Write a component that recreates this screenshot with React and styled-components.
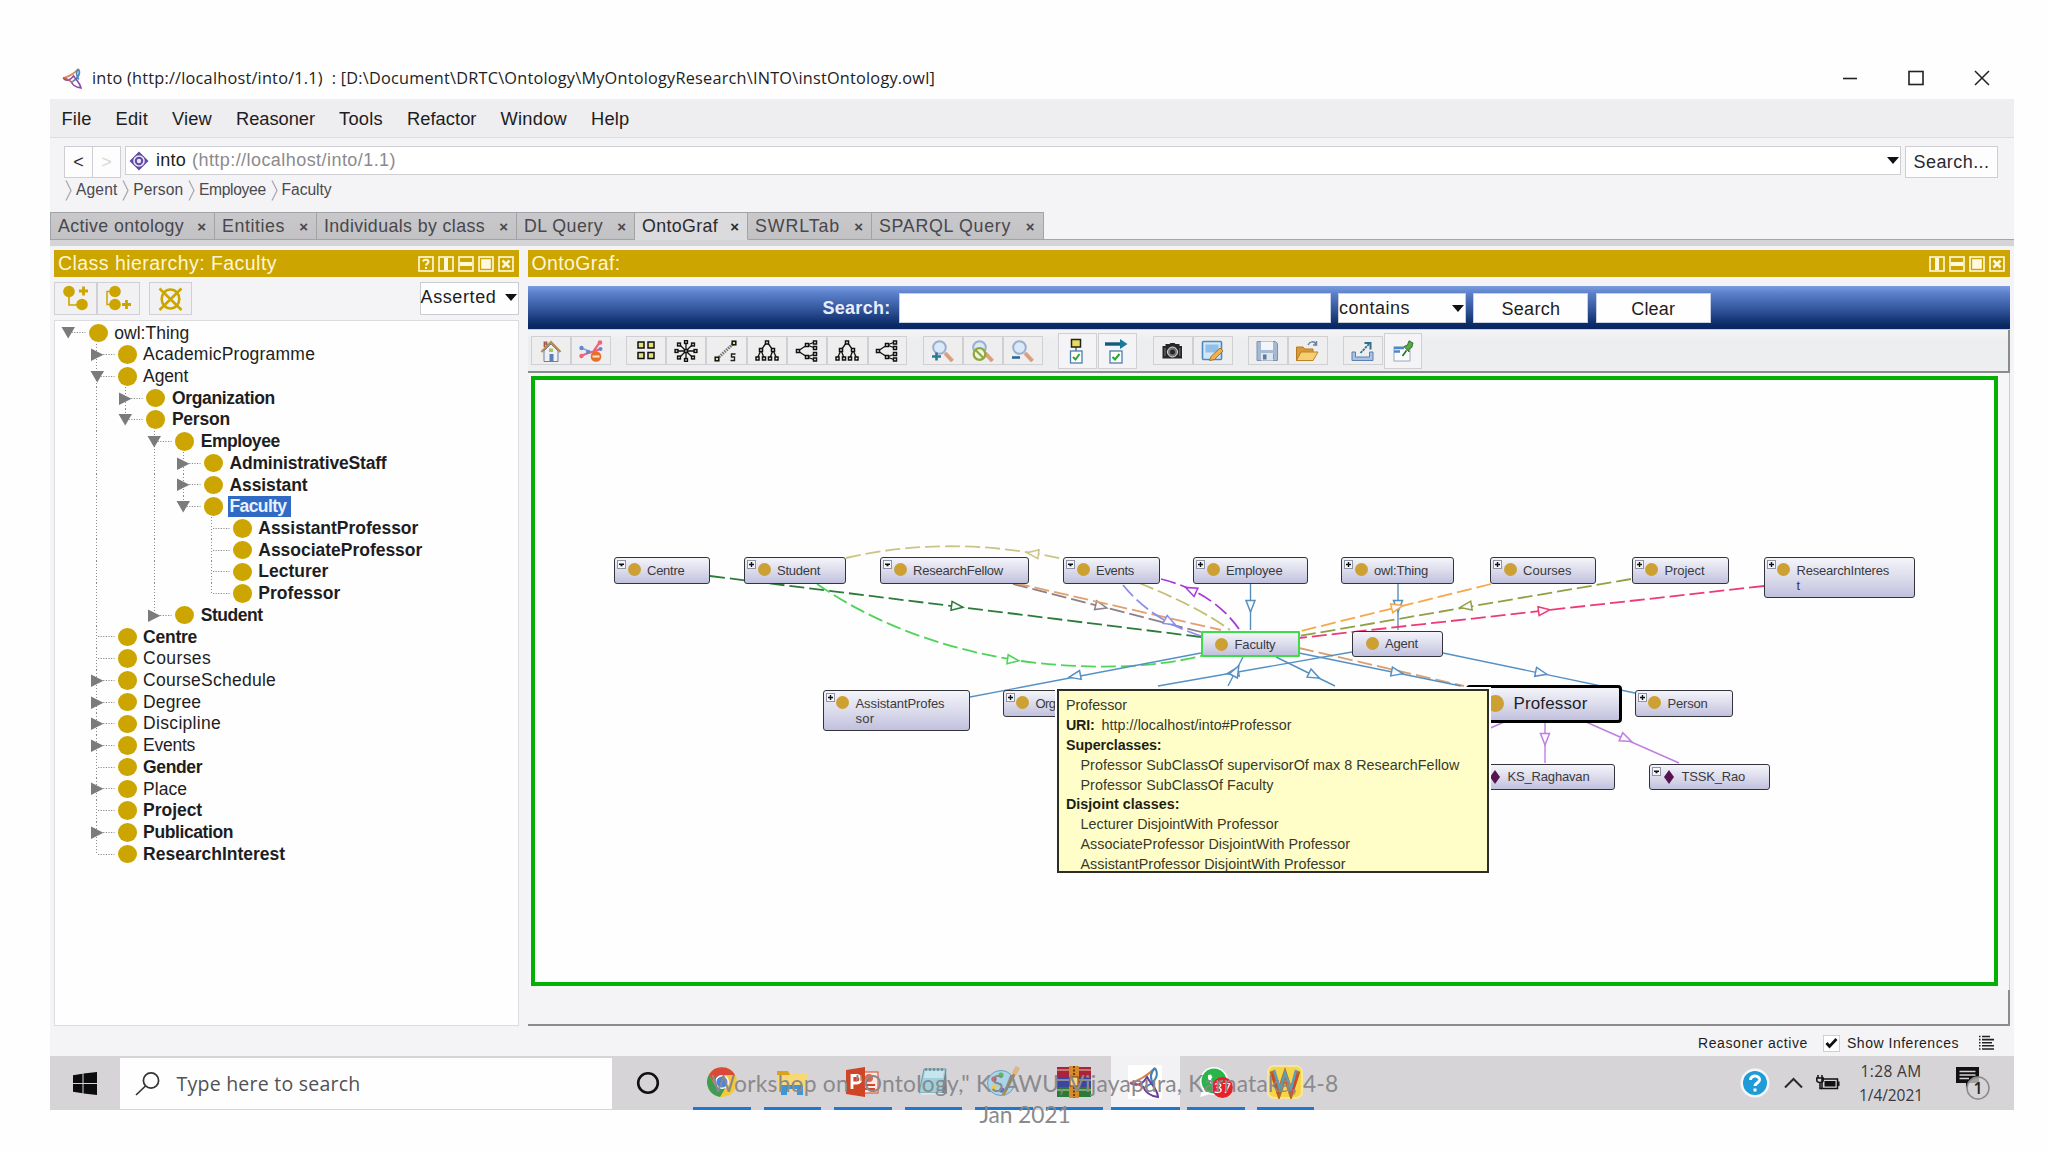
import { useLayoutEffect, useRef } from "react";
import styled, { createGlobalStyle, css } from "styled-components";

const GOLD = "#cca500";
const ARIAL = `"Liberation Sans", Arial, sans-serif`;
const SEGOE = `"Open Sans", "Noto Sans", sans-serif`;

const GlobalStyle = createGlobalStyle`
    * { box-sizing: border-box; }
    body {
        margin: 0;
        background: #fefefe;
        font-family: ${ARIAL};
        color: #1d1d22;
        overflow: hidden;
    }
    svg { display: block; flex: none; }
`

const Label = styled.span`
    display: inline-block;
    white-space: pre;
    flex: none;
`

// spreads the letters so that the label takes exactly the given width
const Fit = ({ w, children }) => {
    const ref = useRef(null);
    useLayoutEffect(() => {
        const el = ref.current;
        el.style.letterSpacing = "0px";
        const natural = el.getBoundingClientRect().width;
        el.style.letterSpacing = `${(w - natural) / children.length}px`;
    }, [w, children]);
    return <Label ref={ref}>{children}</Label>;
}

const Page = styled.div`
    position: relative;
    width: 2048px;
    height: 1152px;
    padding: 57px 34px 0 50px;
    overflow: hidden;
`

const Window = styled.div`
    width: 1964px;
    background: #f4f3f6;
`

/* ---------- title bar and menu ---------- */

const TitleBar = styled.div`
    height: 42px;
    padding: 0 24px 0 12px;
    display: flex;
    align-items: center;
    background: #fefefe;
    font-family: ${SEGOE};
    font-size: 16.3px;
`

const TitleText = styled.div`
    margin-left: 9px;
    flex: 1;
`

const WindowButtons = styled.div`
    display: flex;
    gap: 50px;
`

const MenuBar = styled.div`
    height: 39px;
    padding: 1px 11px 0 11.5px;
    display: flex;
    align-items: center;
    gap: 24px;
    background: #eeedef;
    border-bottom: 1px solid #dddcdf;
    font-size: 18.3px;
`

const AddressRow = styled.div`
    height: 39px;
    padding: 8px 16px 0 14px;
    display: flex;
    align-items: flex-start;
`

const NavButton = styled.button`
    width: ${({ $w }) => $w || 29}px;
    height: 32px;
    padding: 1px 0 0;
    margin-right: ${({ $gap }) => $gap || 0}px;
    background: #fdfdfe;
    border: 1.5px solid #cfced2;
    color: ${({ $off }) => ($off ? "#d8d7da" : "#2a2a2e")};
    font-family: ${ARIAL};
    font-size: 18px;
    & + & { margin-left: -1px; }
`

const Address = styled.div`
    flex: 1;
    height: 29px;
    margin-right: 4px;
    padding: 0 1px 0 3px;
    display: flex;
    align-items: center;
    background: #fff;
    border: 1.5px solid #cfced2;
    font-size: 18px;
`

const AddressUri = styled.div`
    flex: 1;
    margin-left: 6px;
    color: #8b8a8f;
`

const AddressName = styled.div`
    margin-left: 7px;
`

const Crumbs = styled.div`
    height: 35px;
    padding: 2px 0 0 15px;
    display: flex;
    align-items: flex-start;
    gap: 2.7px;
    font-size: 15.6px;
    line-height: 22px;
    color: #4a494f;
`

const Crumb = styled.div`
    display: flex;
    align-items: center;
    gap: 4px;
    margin-right: 2px;
`

/* ---------- tabs ---------- */

const TabStrip = styled.div`
    display: flex;
    height: 28px;
    background: linear-gradient(#a5a4a8, #a5a4a8) bottom / 100% 1.5px no-repeat;
`

const Tab = styled.div`
    width: ${({ $w }) => $w}px;
    padding: 1px 8px 0 7px;
    display: flex;
    align-items: center;
    justify-content: space-between;
    border: 1.5px solid #a3a2a6;
    border-left-width: ${({ $first }) => ($first ? 1.5 : 0)}px;
    background: linear-gradient(#c9c8cb, #c2c1c4);
    color: #48474c;
    font-size: 17.8px;
    ${({ $active }) => $active && css`
        background: #dbdadd;
        border-bottom-color: #dbdadd;
        color: #2a2a2e;
    `}
`

const TabClose = styled.span`
    font-size: 15px;
    font-weight: 700;
    line-height: 14px;
`

const TabShelf = styled.div`
    height: 6px;
    background: #d4d3d6;
`

/* ---------- panels ---------- */

const Main = styled.div`
    height: 784px;
    padding: 4px 4px 4px;
    display: flex;
    gap: 9px;
`

const LeftPanel = styled.div`
    width: 465px;
    display: flex;
    flex-direction: column;
    gap: 5px;
`

const RightPanel = styled.div`
    flex: 1;
    display: flex;
    flex-direction: column;
`

const PanelHeader = styled.div`
    height: 27px;
    padding: 0 5px 0 4px;
    display: flex;
    align-items: center;
    gap: 4px;
    background: ${GOLD};
    color: #fdf6d6;
    font-size: 19.5px;
`

const PanelTitle = styled.div`
    flex: 1;
`

const PanelTools = styled.div`
    height: 33px;
    flex: none;
    display: flex;
`

const ToolButton = styled.div`
    width: ${({ $w }) => $w || 43}px;
    height: ${({ $h }) => $h || 33}px;
    margin-left: ${({ $gap }) => $gap || 0}px;
    display: flex;
    align-items: center;
    justify-content: center;
    background: ${({ $bg }) => $bg || "#f1f0f2"};
    border: 1.5px solid #d0cfd3;
`

const Combo = styled.div`
    width: ${({ $w }) => $w}px;
    height: ${({ $h }) => $h}px;
    padding: 0 1px 0 ${({ $pl }) => $pl || 0}px;
    display: flex;
    align-items: center;
    justify-content: space-between;
    background: #fefefe;
    border: 1.5px solid #cccbd0;
    font-size: 18px;
    padding-bottom: ${({ $lift }) => $lift || 0}px;
`

const Spacer = styled.div`
    flex: 1;
`

const Tree = styled.div`
    flex: 1;
    padding: 1px 0 0 0;
    background: #fefefe;
    border: 1.5px solid #dcdbdf;
`

const TreeRow = styled.div`
    height: 21.72px;
    margin-left: -1.2px;
    display: flex;
    align-items: center;
    font-size: 17.5px;
    font-weight: ${({ $bold }) => ($bold ? 700 : 400)};
`

const Guide = styled.div`
    width: 28.8px;
    height: 100%;
    background: ${({ $on }) => $on ? "repeating-linear-gradient(#8c8c8c 0 1px, transparent 1px 3px) 13.5px 0 / 1.3px 100% no-repeat" : "none"};
`

const TwistyCell = styled.div`
    width: 35px;
    height: 100%;
    display: flex;
    align-items: center;
    background: repeating-linear-gradient(#8c8c8c 0 1px, transparent 1px 3px) 13.5px 0 / 1.3px ${({ $line }) => $line} no-repeat;
`

const ClassDot = styled.span`
    flex: none;
    width: 19px;
    height: 18.5px;
    border-radius: 50%;
    background: ${GOLD};
`

const TreeLabel = styled.div`
    margin-left: 4.5px;
    padding: 0 4px 0 2px;
    height: 20.7px;
    line-height: 21.5px;
    ${({ $selected }) => $selected && css`
        background: #316ac5;
        color: #e8f0ff;
    `}
`

/* ---------- graph ---------- */

const SearchBar = styled.div`
    height: 44px;
    flex: none;
    margin-top: 9px;
    padding: 7px 299px 0 295px;
    display: flex;
    align-items: flex-start;
    gap: 7.3px;
    background: linear-gradient(#7a9ce0 0%, #5a7fca 18%, #2c4f94 60%, #0a2a66 90%, #08265f 100%);
    border-bottom: 1px solid #c9cede;
    font-size: 18px;
    line-height: 30px;
`

const SearchCaption = styled.div`
    margin-right: 1px;
    color: #e8eefb;
    font-weight: 700;
`

const SearchInput = styled.div`
    width: 432px;
    height: 30px;
    background: #fff;
    border: 1px solid #c5cfe6;
`

const SearchButton = styled.div`
    width: 115px;
    height: 30px;
    text-align: center;
    background: #fefefe;
    border: 1px solid #c5cfe6;
`

const IconBar = styled.div`
    height: 43px;
    flex: none;
    padding: 0 0 0 3px;
    display: flex;
    align-items: center;
    background: linear-gradient(#f4f3f5, #ecedee 30%, #edeef0);
    border-bottom: 2px solid #8b8a8d;
    border-right: 2px solid #8b8a8d;
`

const CanvasFrame = styled.div`
    height: 617px;
    flex: none;
    padding: 3px 11.5px 4px 3px;
    border-right: 1.5px solid #cbcacd;
    background: #f6f6f8;
`

const Canvas = styled.div`
    position: relative;
    height: 610px;
    background: #fefefe;
    border: 4px solid #05b005;
    overflow: hidden;
`

const DetailStrip = styled.div`
    height: 36px;
    border-right: 2px solid #8b8a8d;
    border-bottom: 2px solid #8b8a8d;
`

const NodeBox = styled.div`
    position: absolute;
    left: ${({ $x }) => $x - 534}px;
    top: ${({ $y }) => $y - 380}px;
    width: ${({ $w }) => $w}px;
    height: ${({ $h }) => $h}px;
    display: flex;
    background: linear-gradient(#f4f4fa, #dcdcec 50%, #c2c1de);
    border: 1.8px solid #33333b;
    border-radius: 3px;
    color: #3a3a40;
    font-size: 13px;
    line-height: 15px;
    ${({ $variant }) => $variant === "focus" && css`
        border: 2px solid #3ddc4b;
        border-radius: 1px;
    `}
    ${({ $variant }) => $variant === "hover" && css`
        border: 3px solid #000;
        border-radius: 4px;
        color: #222228;
        font-size: 17px;
        line-height: 20px;
    `}
`

const NodeExpand = styled.div`
    width: 12px;
    padding: 2px 0 0 2px;
    flex: none;
`

const NodeMark = styled.div`
    width: ${({ $big }) => ($big ? 33 : 20)}px;
    padding-left: ${({ $big }) => ($big ? 6 : 0.6)}px;
    padding-top: ${({ $big }) => ($big ? 7.5 : 5)}px;
    flex: none;
`

const NodeText = styled.div`
    padding-top: ${({ $big }) => ($big ? 6 : 4.7)}px;
    display: flex;
    flex-direction: column;
    align-items: flex-start;
`

const Tooltip = styled.div`
    position: absolute;
    left: 522.5px;
    top: 309px;
    width: 432px;
    height: 184px;
    padding: 4px 7px 0;
    background: #fffec8;
    border: 2px solid #2e2e28;
    outline: 2px solid #fefefe;
    color: #38382c;
    font-size: 14.3px;
    overflow: hidden;
`

const TipLine = styled.div`
    height: 19.9px;
    padding-left: ${({ $indent }) => ($indent ? 14.5 : 0)}px;
    display: flex;
    align-items: center;
    gap: 7px;
    white-space: nowrap;
    b { color: #1e1e16; }
`

/* ---------- status bar and taskbar ---------- */

const StatusBar = styled.div`
    height: 26px;
    padding-right: 20px;
    display: flex;
    align-items: center;
    justify-content: flex-end;
    font-size: 14px;
    color: #1d1d22;
`

const CheckBox = styled.div`
    width: 17px;
    height: 17px;
    margin: 0 7px 0 15px;
    display: flex;
    align-items: center;
    justify-content: center;
    background: #fff;
    border: 1px solid #cfcfd3;
`

const Taskbar = styled.div`
    height: 54px;
    display: flex;
    align-items: stretch;
    background: #d6d4d6;
`

const TaskCell = styled.div`
    width: ${({ $w }) => $w}px;
    display: flex;
    align-items: center;
    justify-content: center;
`

const TaskSearch = styled.div`
    width: 492px;
    margin: 2px 0 1px;
    padding-left: 15px;
    display: flex;
    align-items: center;
    gap: 16.5px;
    background: #fefefe;
    color: #515156;
    font-family: ${SEGOE};
    font-size: 19.5px;
`

const TaskApp = styled.div`
    width: ${({ $active }) => ($active ? 69 : 57.5)}px;
    margin-right: ${({ $gap }) => $gap}px;
    display: flex;
    align-items: center;
    justify-content: center;
    background: ${({ $active }) => ($active ? "#f2f1f3" : "none")};
    border-bottom: 3px solid #1e78d0;
`

const Tray = styled.div`
    flex: 1;
    display: flex;
    align-items: center;
    justify-content: flex-end;
    padding-right: 23px;
`

const Clock = styled.div`
    width: 66px;
    margin: 0 31px 0 18px;
    text-align: center;
    font-family: ${SEGOE};
    font-size: 15.5px;
    line-height: 24.5px;
    color: #38383c;
`

const SlideFooter = styled.div`
    position: absolute;
    left: 701px;
    top: 1068px;
    width: 648px;
    text-align: center;
    font-family: Lato, sans-serif;
    font-size: 22.8px;
    line-height: 31px;
    color: #8a898c;
`

/* ---------- icons ---------- */

const ProtegeIcon = ({ size = 20 }) => (
    <svg width={size} height={size} viewBox="0 0 20 20" fill="none" strokeWidth="1.6">
        <path d="M1 9.5C6 8.5 11 5.5 15.5 1" stroke="#d98a5a" />
        <path d="M15.5 1C18 5 16 9 10 13M15.500 1C13 4 14 8 16 11" stroke="#4a8ab8" />
        <path d="M1 9.5C4 13 8 12 11 7.500C13 11 17 14 18 19C14 18.500 10 17 9 13" stroke="#8a4aa8" />
        <path d="M1 9.500C5 9.500 7 12 10 14" stroke="#c0605a" />
    </svg>
)

const OntologyIcon = () => (
    <svg width="20" height="20" viewBox="0 0 20 20">
        <path d="M10 .5 19.5 10 10 19.5 .5 10Z" fill="#5f4aa3" />
        <circle cx="10" cy="10" r="5" fill="none" stroke="#e9e4f6" strokeWidth="1.6" />
        <circle cx="10" cy="10" r="2.2" fill="#e9e4f6" />
    </svg>
)

const Caret = () => (
    <svg width="12" height="7" viewBox="0 0 12 7"><path d="M0 0H12L6 7Z" fill="#111" /></svg>
)

const PanelIcon = ({ kind }) => (
    <svg width="16" height="16" viewBox="0 0 16 16" fill="none" stroke="#fff9dd" strokeWidth="1.6">
        <rect x="1" y="1" width="14" height="14" />
        {kind === "help" && <path d="M5 5.5C5.5 3 10.5 3 10.5 5.8C10.5 7.6 8 7.6 8 9.6M8 11V13" strokeWidth="2" />}
        {kind === "cols" && <path d="M8 2V14" strokeWidth="4" />}
        {kind === "rows" && <path d="M2 8H14" strokeWidth="4" />}
        {kind === "full" && <rect x="4" y="4" width="8" height="8" fill="#fff9dd" />}
        {kind === "close" && <path d="M4.5 4.5 11.5 11.5M11.5 4.5 4.5 11.5" strokeWidth="2.6" />}
    </svg>
)

const TreeToolIcon = ({ kind }) => (
    <svg width="27" height="27" viewBox="0 0 27 27" fill={GOLD} stroke={GOLD}>
        {kind === "child" && <>
            <circle cx="7" cy="6.500" r="5.800" stroke="none" /><circle cx="20" cy="19.500" r="5.800" stroke="none" />
            <path d="M7 8V20H16" fill="none" strokeWidth="1.6" />
            <path d="M17 6H26M21.5 1.500V10.500" strokeWidth="2.8" />
        </>}
        {kind === "sibling" && <>
            <circle cx="10" cy="6.500" r="5.800" stroke="none" /><circle cx="10" cy="19.500" r="5.800" stroke="none" />
            <path d="M7 6.5H2V19.500H7" fill="none" strokeWidth="1.5" />
            <path d="M17 19.5H26M21.5 15V24" strokeWidth="2.8" />
        </>}
        {kind === "delete" && <>
            <ellipse cx="13.5" cy="14" rx="8.800" ry="9.500" fill="none" strokeWidth="2.6" />
            <path d="M2.500 3.500 24.500 25M24.500 3.500 2.500 25" strokeWidth="2.6" />
        </>}
    </svg>
)

const Twisty = ({ state }) => (
    <svg width="34" height="21" viewBox="0 0 34 21">
        <path d="M15 10.500H31.500" stroke="#8c8c8c" strokeWidth="1.2" strokeDasharray="1.200 1.400" />
        {state === "open" && <path d="M7.500 5H21L14.200 16.500Z" fill="#7b7b7b" />}
        {state === "closed" && <path d="M8 4.500V17L20.500 10.700Z" fill="#7b7b7b" />}
    </svg>
)

const Sq = ({ x, y, s = 3.6, fill = "#fff" }) => (
    <rect x={x - s / 2} y={y - s / 2} width={s} height={s} fill={fill} stroke="#111" strokeWidth="1.500" />
)

const GraphIcon = ({ kind }) => {
    const box = { width: 24, height: 22, viewBox: "0 0 24 22", fill: "none" };
    switch (kind) {
        case "home":
            return <svg {...box}>
                <path d="M5 11V21.500H19V11L12 4Z" fill="#eef0f6" stroke="#6d7f9c" />
                <path d="M2.500 12 12 2 21.500 12" stroke="#b58a56" strokeWidth="2.200" />
                <path d="M5.500 1.500V7M7.500 1.500V5" stroke="#a05a48" strokeWidth="1.800" />
                <rect x="10.500" y="14" width="4" height="7.500" fill="#5f7fb8" />
                <rect x="10" y="8.500" width="4" height="3.500" fill="#a8c458" />
            </svg>
        case "remove":
            return <svg {...box}>
                <path d="M2 8 21 15" stroke="#7f9fe4" strokeWidth="1.700" />
                <path d="M2 16 9 13 14 12 21 2M14 12 21 9" stroke="#ee6478" strokeWidth="2.200" />
                <circle cx="2.500" cy="8" r="2.200" fill="#5f86d8" /><circle cx="2.500" cy="16" r="2.200" fill="#ee6478" />
                <circle cx="9" cy="12" r="2" fill="#5f86d8" />
                <circle cx="21" cy="2.500" r="2.300" fill="#ee6478" /><circle cx="21.500" cy="9" r="2" fill="#5f86d8" />
                <circle cx="17" cy="16.500" r="5.300" fill="#e5702c" /><path d="M13.500 16.500H20.500" stroke="#ffe3cc" strokeWidth="2" />
            </svg>
        case "grid":
            return <svg {...box}>
                {[[7, 5], [17, 5], [7, 15.5], [17, 15.5]].map(([x, y]) => <Sq key={x + "-" + y} x={x} y={y} s={6} fill="#e4e07a" />)}
            </svg>
        case "radial":
            return <svg {...box}>
                <path d="M12 2V20M2 11H22M5 4 19 18M19 4 5 18" stroke="#111" strokeWidth="1.300" />
                {[[12, 2], [12, 20], [2.5, 11], [21.5, 11], [5, 4.5], [19, 17.5], [19, 4.5], [5, 17.5], [12, 11]].map(([x, y]) => <Sq key={x + "-" + y} x={x} y={y} s={2.8} />)}
            </svg>
        case "spring":
            return <svg {...box}>
                <path d="M5 17 19 4" stroke="#777" strokeWidth="3" strokeDasharray="1.500 1" />
                <Sq x={3} y={19} fill="#e4e07a" /><Sq x={20} y={3} fill="#e4e07a" />
                <path d="M21.500 14H17.500V17H20.500V20.500H16.500" stroke="#222" strokeWidth="1.400" />
            </svg>
        case "treeV":
            return <svg {...box}>
                <path d="M12 2 6 10 2.500 18M12 2 18 10 21.500 18M6 10 9 18M18 10 15 18" stroke="#111" strokeWidth="1.300" />
                {[[12, 2.5], [6, 10], [18, 10], [2.5, 18.5], [9, 18.5], [15, 18.5], [21.5, 18.5]].map(([x, y]) => <Sq key={x + "-" + y} x={x} y={y} s={3} />)}
            </svg>
        case "treeH":
            return <svg {...box}>
                <path d="M3 11 12 5 20 2M3 11 12 17 20 20M12 5 20 8M12 17 20 14" stroke="#111" strokeWidth="1.300" />
                {[[3, 11], [12, 5], [12, 17], [20, 2.5], [20, 8], [20, 14], [20, 19.5]].map(([x, y]) => <Sq key={x + "-" + y} x={x} y={y} s={3} />)}
            </svg>
        case "zoomIn":
        case "zoomNone":
        case "zoomOut":
            return <svg {...box}>
                <path d="M14 13 21.500 21" stroke="#d9a080" strokeWidth="4" />
                <circle cx="8.500" cy="7.500" r="6.300" fill="#dbe8f6" stroke="#9aaed0" strokeWidth="2" />
                {kind === "zoomIn" && <path d="M1 16.500H10M5.500 12.500V20.500" stroke="#2a7a96" strokeWidth="2.600" />}
                {kind === "zoomOut" && <path d="M1 17.500H9" stroke="#2a6a96" strokeWidth="2.600" />}
                {kind === "zoomNone" && <><circle cx="8.500" cy="14" r="5.800" fill="#eef4e0" stroke="#8da83c" strokeWidth="2.200" /><path d="M4.500 10 12.500 18" stroke="#8da83c" strokeWidth="2.200" /></>}
            </svg>
        case "nodeTypes":
            return <svg width="24" height="26" viewBox="0 0 24 26" fill="none">
                <rect x="6.500" y="1.500" width="9" height="7.500" fill="#e6dc58" stroke="#222" strokeWidth="1.500" />
                <path d="M11 9V13" stroke="#222" />
                <rect x="5.500" y="13" width="11.500" height="12" fill="#fff" stroke="#4a7fb0" strokeWidth="1.300" />
                <path d="M8 19 10.500 21.500 14.500 16" stroke="#2ba52b" strokeWidth="2" />
            </svg>
        case "arcTypes":
            return <svg width="24" height="26" viewBox="0 0 24 26" fill="none">
                <path d="M0 6H17" stroke="#125a7c" strokeWidth="3.400" /><path d="M15 1 22.500 6 15 11Z" fill="#1b7a9c" />
                <rect x="5" y="13" width="12" height="12" fill="#fff" stroke="#4a7fb0" strokeWidth="1.300" />
                <path d="M7.500 19 10 21.500 14.500 16" stroke="#2ba52b" strokeWidth="2" />
            </svg>
        case "camera":
            return <svg {...box}>
                <path d="M1.500 6H4.500V4H8.500L9.500 3H13.500L14.500 4H18.500V6H21V18.500H1.500Z" fill="#26262a" />
                <circle cx="11.500" cy="12" r="5" fill="#777" stroke="#ddd" strokeWidth="1" /><circle cx="11.500" cy="12" r="2.500" fill="#26262a" />
                <path d="M4 8V16M18.800 8V16" stroke="#777" />
            </svg>
        case "editImage":
            return <svg {...box}>
                <rect x="1.500" y="1.500" width="19" height="18" rx="1" fill="#d3e6f7" stroke="#4a8ac4" strokeWidth="1.600" />
                <rect x="4.500" y="4.500" width="13" height="8" fill="#8fc0ea" />
                <path d="M8.500 20.500 10 16.500 19 8 22 11 13.500 19.500Z" fill="#f0b04a" stroke="#a8742a" />
            </svg>
        case "save":
            return <svg {...box}>
                <path d="M1 1.500H19.500L21.500 3.500V20.500H1Z" fill="#a6b9d4" stroke="#7c92b5" />
                <rect x="5" y="1.500" width="12" height="8.500" fill="#f2f5fa" />
                <rect x="5" y="13" width="12" height="7.500" fill="#dfe6ec" /><rect x="7" y="14.500" width="3.500" height="5" fill="#5a7a9a" />
                <path d="M17.500 14V19" stroke="#8aa86a" />
            </svg>
        case "open":
            return <svg {...box}>
                <path d="M.5 20.500V7H7L9 9H17V20.500Z" fill="#d99a35" stroke="#b57a22" />
                <path d="M.5 20.500 5 12H22L17 20.500Z" fill="#f6cf72" stroke="#b98426" />
                <path d="M12 5C14 1 18 1 20 4M20.500 1V5H17" stroke="#6a7fa8" strokeWidth="1.500" />
            </svg>
        case "export":
            return <svg {...box}>
                <path d="M1 12V20.500H22V12H18.500V17H4.500V12Z" fill="#a9c2e0" stroke="#5a80b4" />
                <path d="M9.500 13 18 4" stroke="#2f7090" strokeWidth="1.800" strokeDasharray="2.500 .8" /><path d="M13.500 3H19.500V9.500" stroke="#2f7090" strokeWidth="2" />
            </svg>
        default:
            return <svg {...box}>
                <rect x="3" y="7" width="16" height="14" fill="#fbfcfe" stroke="#9aa8bc" />
                <path d="M3 8H13M3 11.500H9" stroke="#4a88d0" strokeWidth="2.600" />
                <path d="M11.500 16 15.500 10.500" stroke="#2a6a2a" strokeWidth="1.600" />
                <path d="M13 6.500 16.500 5 18 .8 22 3 20.800 7.500 18 9 18 12Z" fill="#58a644" stroke="#2e7a2e" />
            </svg>
    }
}

const AppIcon = ({ name }) => {
    const box = { width: 34, height: 32, viewBox: "0 0 34 32" };
    switch (name) {
        case "chrome":
            return <svg {...box}>
                <circle cx="17" cy="16" r="15" fill="#f6c83a" />
                <path d="M4 8.500A15 15 0 0 0 15 30.900L21 21 10.500 20Z" fill="#3f9c50" />
                <path d="M4 8.500 11 20 17 9H30A15 15 0 0 0 4 8.500Z" fill="#d94a3a" />
                <circle cx="17" cy="16" r="7" fill="#fff" /><circle cx="17" cy="16" r="5.500" fill="#4a86e0" />
            </svg>
        case "explorer":
            return <svg {...box}>
                <path d="M2 5H13L15 8H32V26H2Z" fill="#f8d775" /><path d="M2 5H13L15 9H2Z" fill="#d9a023" />
                <path d="M6 29V19H28V29H22V23H12V29Z" fill="#3f95d8" />
            </svg>
        case "powerpoint":
            return <svg {...box}>
                <rect x="15" y="6" width="17" height="21" fill="#fbe9e4" stroke="#d4472b" />
                <circle cx="23" cy="12" r="4" fill="#e0644a" /><path d="M19 19H29M19 23H29" stroke="#d4472b" strokeWidth="2" />
                <path d="M0 4 19 1V31L0 28Z" fill="#d04526" />
                <path d="M6 23V9.500H11C16 9.500 16 17 11 17H6" fill="none" stroke="#fff" strokeWidth="2.800" />
            </svg>
        case "notepad":
            return <svg {...box}>
                <path d="M8 3H30L26 27H3Z" fill="#9fd0de" stroke="#6f98a8" /><path d="M9 5H28L27 12H8Z" fill="#c5e6ee" />
                <path d="M30 3 31 28 26 27Z" fill="#777f88" /><path d="M3 27 26 27 31 28 7 29Z" fill="#dfe6e8" />
                <path d="M10 2V5M14 2V5M18 2V5M22 2V5M26 2V5" stroke="#666" />
            </svg>
        case "paint":
            return <svg {...box}>
                <ellipse cx="14" cy="17" rx="13.500" ry="12.500" fill="#a9d4ea" stroke="#6b9fc0" />
                <circle cx="7" cy="13" r="2.600" fill="#d9534f" /><circle cx="14" cy="9" r="2.600" fill="#5cb85c" />
                <circle cx="7" cy="21" r="2.600" fill="#f0c84a" /><circle cx="15" cy="24" r="2.600" fill="#4a78c8" />
                <path d="M16 29 29 5" stroke="#b8864a" strokeWidth="3" /><path d="M27 8 31 1" stroke="#d8b890" strokeWidth="5" />
            </svg>
        case "winrar":
            return <svg {...box}>
                <rect x="0" y="1" width="34" height="10" fill="#a8243c" /><rect x="0" y="11" width="34" height="10" fill="#3a46a0" />
                <rect x="0" y="21" width="34" height="10" fill="#2a7a3a" />
                <path d="M0 4H34M0 14H34M0 24H34" stroke="#e2c9a0" strokeWidth="1" />
                <rect x="12" y="0" width="10" height="32" fill="#d88a2a" /><rect x="13" y="11" width="8" height="9" fill="#f5d68a" stroke="#6a4212" />
                <path d="M17 0V10M17 21V32" stroke="#6a4212" strokeWidth="2" strokeDasharray="2 1.500" />
            </svg>
        case "protege":
            return <svg width="34" height="34" viewBox="0 0 34 34" fill="none">
                <rect width="34" height="34" fill="#fff" />
                <path d="M2 18C10 16 19 11 27 3" stroke="#d9814a" strokeWidth="2" />
                <path d="M27 3C32 11 26 18 17 22M27 3C21 9 22 14 26 19" stroke="#3f83b5" strokeWidth="2" />
                <path d="M2 18C9 22 15 19 19 12C22 18 30 24 30 32C22 31 17 27 15 21" stroke="#6a3d9a" strokeWidth="2" />
                <path d="M2 18C8 17 12 20 16 24" stroke="#c0586a" strokeWidth="1.500" />
            </svg>
        case "whatsapp":
            return <svg {...box}>
                <circle cx="15" cy="15" r="14" fill="#fff" /><path d="M1 31 4 22 11 28Z" fill="#fff" />
                <circle cx="15" cy="15" r="12.500" fill="#2ab54a" />
                <path d="M9 9C8 15 14 22 21 21L21.500 18 18 16.500 16 18C14 17 12.500 15 12 13L13.500 11.500 12 8.500Z" fill="#fff" />
                <ellipse cx="23.500" cy="21.500" rx="10.500" ry="10.500" fill="#e8202a" />
                <text x="23.500" y="26.500" textAnchor="middle" fontFamily="Open Sans" fontSize="15" fill="#fff">37</text>
            </svg>
        default:
            return <svg width="36" height="34" viewBox="0 0 36 34" fill="none">
                <rect x="1" y="1" width="34" height="32" rx="6" fill="#f7d548" stroke="#f9e69a" strokeWidth="2" />
                <path d="M5 6 12 28 18 10 24 28 31 6" stroke="#b5682c" strokeWidth="5" />
                <path d="M7 5 13 24 18 8 24 24 29 5" stroke="#5a9fb8" strokeWidth="2.500" />
                <path d="M5 9 11 29M25 28 31 9" stroke="#d8442e" strokeWidth="2" />
            </svg>
    }
}

/* ---------- data ---------- */

const MENUS = [["File", 30], ["Edit", 32.5], ["View", 40], ["Reasoner", 79], ["Tools", 44], ["Refactor", 69.5], ["Window", 66.5], ["Help", 38.5]];

const CRUMBS = [["Agent", 41.5], ["Person", 50], ["Employee", 67], ["Faculty", 50]];

const TABS = [
    ["Active ontology", 126, 165],
    ["Entities", 63, 102],
    ["Individuals by class", 161, 200],
    ["DL Query", 79, 118],
    ["OntoGraf", 76, 113],
    ["SWRLTab", 85, 124],
    ["SPARQL Query", 132, 171.5],
];

// name, label width, level, bold, state, last child, ancestor guides
const TREE = [
    ["owl:Thing", 75, 0, false, "open", true, []],
    ["AcademicProgramme", 172, 1, false, "closed", false, [0]],
    ["Agent", 45, 1, false, "open", false, [0]],
    ["Organization", 103, 2, true, "closed", false, [0, 1]],
    ["Person", 58, 2, true, "open", true, [0, 1]],
    ["Employee", 79, 3, true, "open", false, [0, 1, 0]],
    ["AdministrativeStaff", 157, 4, true, "closed", false, [0, 1, 0, 1]],
    ["Assistant", 78, 4, true, "closed", false, [0, 1, 0, 1]],
    ["Faculty", 57, 4, true, "open", true, [0, 1, 0, 1]],
    ["AssistantProfessor", 160, 5, true, null, false, [0, 1, 0, 1, 0]],
    ["AssociateProfessor", 164, 5, true, null, false, [0, 1, 0, 1, 0]],
    ["Lecturer", 70, 5, true, null, false, [0, 1, 0, 1, 0]],
    ["Professor", 82, 5, true, null, true, [0, 1, 0, 1, 0]],
    ["Student", 62, 3, true, "closed", true, [0, 1, 0]],
    ["Centre", 54, 1, true, null, false, [0]],
    ["Courses", 68, 1, false, null, false, [0]],
    ["CourseSchedule", 133, 1, false, "closed", false, [0]],
    ["Degree", 58, 1, false, "closed", false, [0]],
    ["Discipline", 78, 1, false, "closed", false, [0]],
    ["Events", 52, 1, false, "closed", false, [0]],
    ["Gender", 59, 1, true, null, false, [0]],
    ["Place", 44, 1, false, "closed", false, [0]],
    ["Project", 59, 1, true, null, false, [0]],
    ["Publication", 90, 1, true, "closed", false, [0]],
    ["ResearchInterest", 142, 1, true, null, true, [0]],
];

const TOOLS = [
    ["home", 40], ["remove", 40], ["grid", 40, 15], ["radial", 40], ["spring", 41], ["treeV", 40], ["treeH", 40], ["treeV", 41], ["treeH", 39.5],
    ["zoomIn", 40, 15.5], ["zoomNone", 40], ["zoomOut", 40], ["nodeTypes", 39, 15, true], ["arcTypes", 39, 1, true],
    ["camera", 40, 16], ["editImage", 40], ["save", 40, 15], ["open", 40], ["export", 40, 15], ["pin", 38, 1, true],
];

const NODES = [
    { x: 613.5, y: 557, w: 96, lines: [["Centre", 37.5]], sign: "-" },
    { x: 743.5, y: 557, w: 102, lines: [["Student", 43]] },
    { x: 879.5, y: 557, w: 149, lines: [["ResearchFellow", 90]], sign: "-" },
    { x: 1062.5, y: 557, w: 96.5, lines: [["Events", 38]], sign: "-" },
    { x: 1192.5, y: 557, w: 114.5, lines: [["Employee", 56.5]] },
    { x: 1340.5, y: 557, w: 112.5, lines: [["owl:Thing", 54]] },
    { x: 1489.5, y: 557, w: 105.5, lines: [["Courses", 48.5]] },
    { x: 1631, y: 557, w: 97.5, lines: [["Project", 40]] },
    { x: 1763, y: 557, w: 151.5, h: 41, lines: [["ResearchInteres", 92.5], ["t", 4]] },
    { x: 1200, y: 630.5, w: 99, lines: [["Faculty", 41]], variant: "focus", sign: "none" },
    { x: 1351.5, y: 630.5, w: 91, lines: [["Agent", 33]], sign: "none" },
    { x: 822, y: 690, w: 147, h: 41, lines: [["AssistantProfes", 89], ["sor", 19]] },
    { x: 1002, y: 690, w: 122, lines: [["Org", 20]] },
    { x: 1634, y: 690, w: 98.5, lines: [["Person", 40]] },
    { x: 1465, y: 684.5, w: 156, h: 38, lines: [["Professor", 74]], variant: "hover", sign: "none" },
    { x: 1474, y: 763.5, w: 140, lines: [["KS_Raghavan", 82]], individual: true },
    { x: 1648, y: 763.5, w: 121, lines: [["TSSK_Rao", 63.5]], individual: true, sign: "-" },
];

// path, colour, dashed, arrow x, arrow y, arrow angle
const EDGES = [
    ["M845 558Q950 534 1062 559", "#c9c585", true, 1032, 553.5, 187],
    ["M1138 583Q1196 606 1229 630", "#c3bd70", true],
    ["M709 576 1200 637", "#2c7a3c", true, 956, 606.5, 7],
    ["M816 584C880 628 950 650 1020 661C1090 670 1150 668 1200 656", "#4fd35a", true, 1012, 660, 8],
    ["M1012 584 1200 632", "#8c8088", true, 1100, 606.5, 14],
    ["M1014 583 1220 630", "#e0a070", true],
    ["M1298 648 1463 686", "#dba070", true],
    ["M1122 585Q1150 620 1200 636", "#8c8cf0", true, 1169, 622, 28],
    ["M1160 579Q1212 592 1238 629", "#a838dc", true, 1190, 590, 205],
    ["M1249.5 583V630", "#5590bd", false, 1249.5, 606, 90],
    ["M1397 583V630", "#5590bd", false, 1397, 606, 90],
    ["M1490 584 1298 631.5", "#f5a84a", true, 1396, 607, -14],
    ["M1630 579 1298 636", "#92a045", true, 1465, 606.5, 171],
    ["M1763 586 1298 638", "#ee3a76", true, 1543, 610.5, -7],
    ["M1200 653 969 697", "#5590c4", false, 1074, 676, 169],
    ["M1351 652 1157 686", "#5590c4", false, 1232, 672.5, 170],
    ["M1242 657 1227 686", "#5590c4", false, 1235, 671, 298],
    ["M1275 657 1334 686", "#5590c4", false, 1313, 675.5, 26],
    ["M1298 653 1460 686", "#5590c4", false, 1396, 672.5, 11],
    ["M1442 653 1634 693", "#5590c4", false, 1540, 673, 12],
    ["M1544 722V763", "#c07ee0", false, 1544, 739, 90],
    ["M1585 722 1678 763", "#c07ee0", false, 1625, 739, 24],
    ["M1503 722 1485 730", "#c07ee0", false],
];

const APPS = [["chrome", 13], ["explorer", 13], ["powerpoint", 13], ["notepad", 13], ["paint", 13], ["winrar", 7.5], ["protege", 7.5], ["whatsapp", 12], ["words", 0]];

/* ---------- parts ---------- */

const ClassTree = () => (
    <Tree>
        {TREE.map(([name, width, level, bold, state, last, guides]) => (
            <TreeRow key={name} $bold={bold}>
                {guides.map((on, i) => <Guide key={i} $on={on} />)}
                <TwistyCell $line={level === 0 ? "0" : last ? "50%" : "100%"}>
                    <Twisty state={state} />
                </TwistyCell>
                <ClassDot />
                <TreeLabel $selected={name === "Faculty"}><Fit w={width}>{name}</Fit></TreeLabel>
            </TreeRow>
        ))}
    </Tree>
)

const Node = ({ x, y, w, h = 26.5, lines, variant, sign = "+", individual }) => {
    const big = variant === "hover";
    return (
        <NodeBox $x={x} $y={y} $w={w} $h={h} $variant={variant}>
            <NodeExpand>
                {sign !== "none" && (
                    <svg width="9" height="9" viewBox="0 0 9 9">
                        <rect x=".5" y=".5" width="8" height="8" fill="#f6f6fb" stroke="#8d94a6" />
                        <path d={sign === "+" ? "M2 4.500H7M4.500 2V7" : "M2 4.200H7M3.500 5.500H5.500"} stroke="#111" strokeWidth="1.400" />
                    </svg>
                )}
            </NodeExpand>
            <NodeMark $big={big}>
                {individual
                    ? <svg width="14" height="14" viewBox="0 0 14 14"><path d="M7 0 12 7 7 14 2 7Z" fill="#551350" /></svg>
                    : <svg width={big ? 17 : 13} height={big ? 17 : 13} viewBox="0 0 13 13"><circle cx="6.500" cy="6.500" r="6.500" fill="#cca033" /></svg>}
            </NodeMark>
            <NodeText $big={big}>
                {lines.map(([text, width]) => <Fit key={text} w={width}>{text}</Fit>)}
            </NodeText>
        </NodeBox>
    );
}

const Graph = () => (
    <Canvas>
        <svg width="1459" height="602" viewBox="534 380 1459 602" fill="none">
            {EDGES.map(([d, color, dashed, ax, ay, angle]) => (
                <g key={d} stroke={color} strokeWidth={dashed ? 1.8 : 1.4}>
                    <path d={d} strokeDasharray={dashed ? "15 5" : undefined} />
                    {ax && <path d="M-5.500 -4.500 6 0 -5.500 4.500Z" fill="#fbfbfd" strokeWidth="1.500" transform={`translate(${ax} ${ay}) rotate(${angle})`} />}
                </g>
            ))}
        </svg>
        {NODES.map(node => <Node key={node.lines[0][0]} {...node} />)}
        <Tooltip>
            <TipLine><Fit w={61}>Professor</Fit></TipLine>
            <TipLine><b><Fit w={28.5}>URI:</Fit></b><Fit w={190}>http://localhost/into#Professor</Fit></TipLine>
            <TipLine><b><Fit w={95.5}>Superclasses:</Fit></b></TipLine>
            <TipLine $indent><Fit w={379}>Professor SubClassOf supervisorOf max 8 ResearchFellow</Fit></TipLine>
            <TipLine $indent><Fit w={193}>Professor SubClassOf Faculty</Fit></TipLine>
            <TipLine><b><Fit w={113.5}>Disjoint classes:</Fit></b></TipLine>
            <TipLine $indent><Fit w={198}>Lecturer DisjointWith Professor</Fit></TipLine>
            <TipLine $indent><Fit w={269.5}>AssociateProfessor DisjointWith Professor</Fit></TipLine>
            <TipLine $indent><Fit w={265}>AssistantProfessor DisjointWith Professor</Fit></TipLine>
        </Tooltip>
    </Canvas>
)

const TrayIcons = () => (
    <>
        <svg width="30" height="30" viewBox="0 0 30 30">
            <circle cx="15" cy="15" r="14.500" fill="#f3f8fb" /><circle cx="15" cy="15" r="12" fill="#1f9bd8" />
            <path d="M10.500 12C10.500 6.500 20 7 19.500 12C19 15 15 15 15 18M15 20.500V23.500" fill="none" stroke="#fff" strokeWidth="3" />
        </svg>
        <svg width="46" height="12" viewBox="0 0 46 12"><path d="M15 10.500 23.500 2 32 10.500" fill="none" stroke="#2a2a2e" strokeWidth="2" /></svg>
        <svg width="24" height="18" viewBox="0 0 24 18" fill="none" stroke="#111" strokeWidth="1.500">
            <rect x="6" y="5" width="15.500" height="9.500" /><rect x="8.500" y="7" width="11" height="5.500" fill="#111" stroke="none" />
            <path d="M22.800 7.500V12M2 1V4M6 1V4M.800 4H7.200V6.500C7 8 5.500 8.500 4 8.500C2.500 8.500 1 8 .800 6.500ZM4 8.500V14.500H6" />
        </svg>
    </>
)

const NotificationIcon = () => (
    <svg width="36" height="36" viewBox="0 0 36 36">
        <path d="M1 2H24V18H14L11 23V18H1Z" fill="#111" />
        <path d="M4.500 6.500H20.500M4.500 10H20.500M4.500 13.500H14" stroke="#d6d4d6" strokeWidth="1.400" />
        <circle cx="23" cy="23" r="11" fill="#d6d4d6" fillOpacity=".75" stroke="#8a898c" strokeWidth="1.500" />
        <text x="23" y="29" textAnchor="middle" fontFamily="Open Sans" fontSize="16" fontWeight="600" fill="#222">1</text>
    </svg>
)

const TaskbarRow = () => (
    <Taskbar>
        <TaskCell $w={70}>
            <svg width="24" height="23" viewBox="0 0 24 23">
                <path d="M0 3.200 9.500 1.800V11H0ZM10.500 1.600 24 0V11H10.500ZM0 12H9.500V21.200L0 19.800ZM10.500 12H24V23L10.500 21.400Z" fill="#0c0c0e" />
            </svg>
        </TaskCell>
        <TaskSearch>
            <svg width="25" height="24" viewBox="0 0 25 24" fill="none" stroke="#333" strokeWidth="1.700">
                <circle cx="16" cy="8.500" r="7.600" /><path d="M10.500 14 1 23" />
            </svg>
            <Fit w={184}>Type here to search</Fit>
        </TaskSearch>
        <TaskCell $w={72}>
            <svg width="24" height="24" viewBox="0 0 24 24"><circle cx="12" cy="12" r="9.800" fill="none" stroke="#101014" strokeWidth="2.600" /></svg>
        </TaskCell>
        <TaskCell $w={9} />
        {APPS.map(([name, gap]) => (
            <TaskApp key={name} $active={name === "protege"} $gap={gap}><AppIcon name={name} /></TaskApp>
        ))}
        <Tray>
            <TrayIcons />
            <Clock><Fit w={61}>1:28 AM</Fit><br /><Fit w={64}>1/4/2021</Fit></Clock>
            <NotificationIcon />
        </Tray>
    </Taskbar>
)

export default function App() {
    return (
        <Page>
            <GlobalStyle />
            <Window>
                <TitleBar>
                    <ProtegeIcon size={21} />
                    <TitleText><Fit w={843}>{"into (http://localhost/into/1.1)  : [D:\\Document\\DRTC\\Ontology\\MyOntologyResearch\\INTO\\instOntology.owl]"}</Fit></TitleText>
                    <WindowButtons>
                        <svg width="16" height="16" viewBox="0 0 16 16"><path d="M1 8.500H15" stroke="#222" strokeWidth="1.600" /></svg>
                        <svg width="16" height="16" viewBox="0 0 16 16"><rect x="1" y="1.500" width="14" height="13" fill="none" stroke="#222" strokeWidth="1.600" /></svg>
                        <svg width="16" height="16" viewBox="0 0 16 16"><path d="M1 1 15 15M15 1 1 15" stroke="#222" strokeWidth="1.500" /></svg>
                    </WindowButtons>
                </TitleBar>
                <MenuBar>
                    {MENUS.map(([text, w]) => <Fit key={text} w={w}>{text}</Fit>)}
                </MenuBar>
                <AddressRow>
                    <NavButton>&lt;</NavButton>
                    <NavButton $off $gap={4}>&gt;</NavButton>
                    <Address>
                        <OntologyIcon />
                        <AddressName><Fit w={30}>into</Fit></AddressName>
                        <AddressUri><Fit w={204}>(http://localhost/into/1.1)</Fit></AddressUri>
                        <Caret />
                    </Address>
                    <NavButton $w={93}><Fit w={76}>Search...</Fit></NavButton>
                </AddressRow>
                <Crumbs>
                    {CRUMBS.map(([text, w]) => (
                        <Crumb key={text}>
                            <svg width="7" height="21" viewBox="0 0 7 21"><path d="M1 .5 6 10.500 1 20.500" fill="none" stroke="#a9a8ad" strokeWidth="1.300" /></svg>
                            <Fit w={w}>{text}</Fit>
                        </Crumb>
                    ))}
                </Crumbs>
                <TabStrip>
                    {TABS.map(([text, w, tabW], i) => (
                        <Tab key={text} $w={tabW} $first={i === 0} $active={text === "OntoGraf"}>
                            <Fit w={w}>{text}</Fit>
                            <TabClose>×</TabClose>
                        </Tab>
                    ))}
                </TabStrip>
                <TabShelf />
                <Main>
                    <LeftPanel>
                        <PanelHeader>
                            <PanelTitle><Fit w={219}>Class hierarchy: Faculty</Fit></PanelTitle>
                            {["help", "cols", "rows", "full", "close"].map(kind => <PanelIcon key={kind} kind={kind} />)}
                        </PanelHeader>
                        <PanelTools>
                            <ToolButton><TreeToolIcon kind="child" /></ToolButton>
                            <ToolButton><TreeToolIcon kind="sibling" /></ToolButton>
                            <ToolButton $gap={9}><TreeToolIcon kind="delete" /></ToolButton>
                            <Spacer />
                            <Combo $w={99} $h={33} $lift={2}><Fit w={76}>Asserted</Fit><Caret /></Combo>
                        </PanelTools>
                        <ClassTree />
                    </LeftPanel>
                    <RightPanel>
                        <PanelHeader>
                            <PanelTitle><Fit w={89}>OntoGraf:</Fit></PanelTitle>
                            {["cols", "rows", "full", "close"].map(kind => <PanelIcon key={kind} kind={kind} />)}
                        </PanelHeader>
                        <SearchBar>
                            <SearchCaption><Fit w={68}>Search:</Fit></SearchCaption>
                            <SearchInput />
                            <Combo $w={128} $h={30}><Fit w={71}>contains</Fit><Caret /></Combo>
                            <SearchButton><Fit w={59}>Search</Fit></SearchButton>
                            <SearchButton><Fit w={44}>Clear</Fit></SearchButton>
                        </SearchBar>
                        <IconBar>
                            {TOOLS.map(([kind, w, gap, tall], i) => (
                                <ToolButton key={i} $w={w} $gap={gap} $h={tall ? 36 : 29} $bg={tall ? "#f4f4f6" : "#eeeeef"}>
                                    <GraphIcon kind={kind} />
                                </ToolButton>
                            ))}
                        </IconBar>
                        <CanvasFrame><Graph /></CanvasFrame>
                        <DetailStrip />
                    </RightPanel>
                </Main>
                <StatusBar>
                    <Fit w={110}>Reasoner active</Fit>
                    <CheckBox>
                        <svg width="13" height="12" viewBox="0 0 13 12"><path d="M1.500 6 4.500 9.500 11.500 2" fill="none" stroke="#111" strokeWidth="2.800" /></svg>
                    </CheckBox>
                    <Fit w={112}>Show Inferences</Fit>
                    <svg width="35" height="16" viewBox="0 0 35 16"><path d="M23 1.500H31M23 4.600H35M23 7.700H33M23 10.800H35M23 14H35" stroke="#222" strokeWidth="1.600" /><path d="M20 1.500H21.500M20 4.600H21.500M20 7.700H21.500M20 10.800H21.500M20 14H21.500" stroke="#222" strokeWidth="1.600" /></svg>
                </StatusBar>
                <TaskbarRow />
            </Window>
            <SlideFooter>
                <Fit w={627}>{'Workshop on "Ontology," KSAWU, Vijayapura, Karnataka, 4-8'}</Fit>
                <br />
                <Fit w={91}>Jan 2021</Fit>
            </SlideFooter>
        </Page>
    );
}
